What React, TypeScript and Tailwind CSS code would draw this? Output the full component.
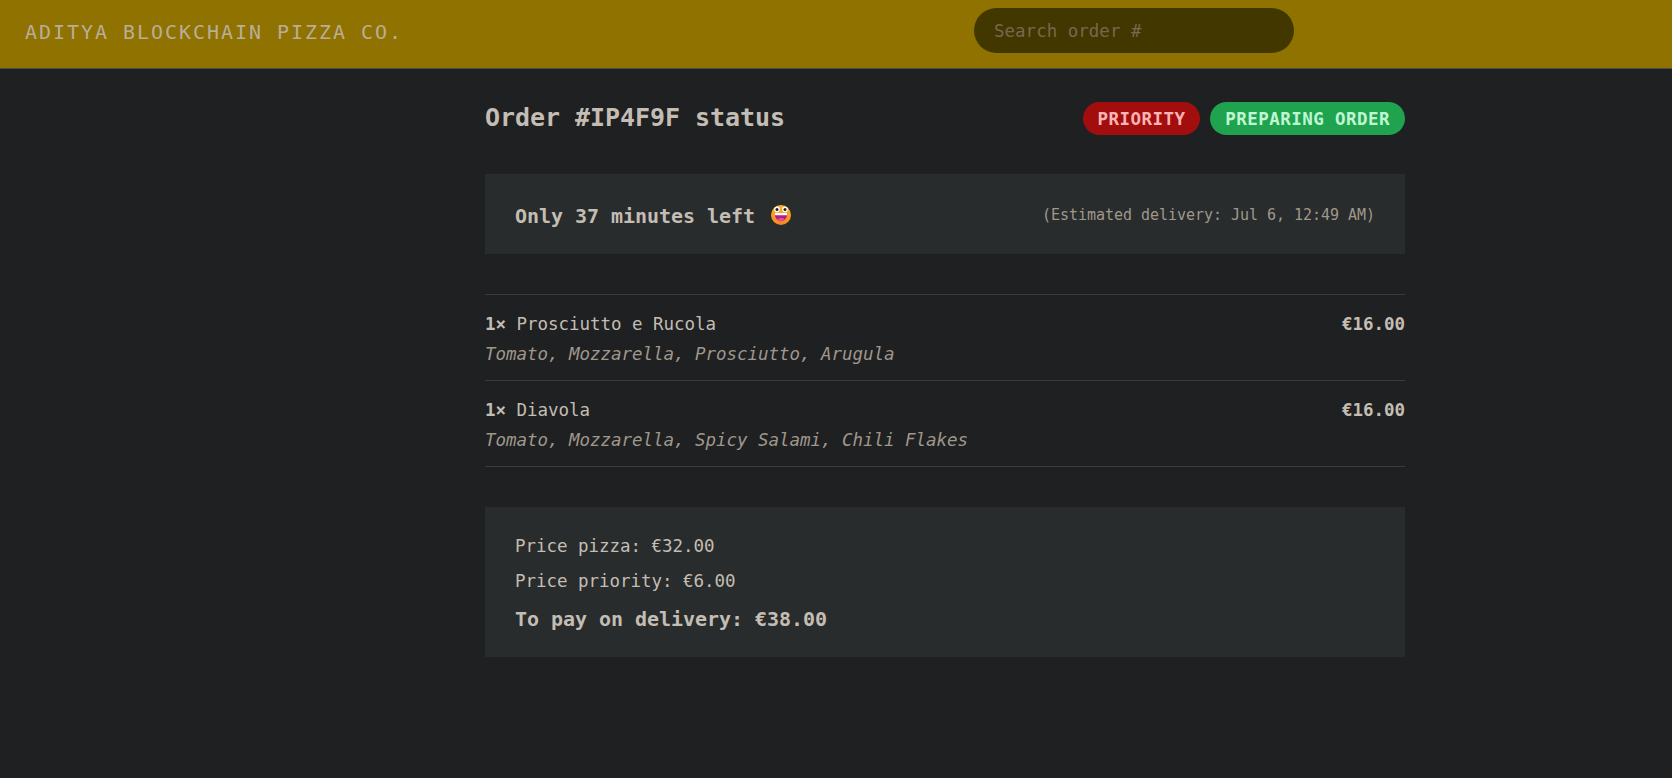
const items = [
  { name: "Prosciutto e Rucola", ingredients: "Tomato, Mozzarella, Prosciutto, Arugula", price: "€16.00" },
  { name: "Diavola", ingredients: "Tomato, Mozzarella, Spicy Salami, Chili Flakes", price: "€16.00" },
]

function GrinEmoji() {
  return (
    <svg width="20" height="20" viewBox="0 0 20 20" className="-mt-0.5 shrink-0">
      <defs>
        <linearGradient id="face" x1="0" y1="0" x2="0" y2="1">
          <stop offset="0" stopColor="#fcb32c" />
          <stop offset="1" stopColor="#f6871f" />
        </linearGradient>
      </defs>
      <circle cx="10" cy="10" r="10" fill="url(#face)" />
      <path d="M3.8 8h12.4c.3 4.6-2.4 8.2-6.2 8.2S3.500 12.600 3.800 8z" fill="#b81b86" />
      <path d="M3.8 8h12.400l-.1 2.200H3.900z" fill="#fff" />
      <path d="M6.400 14.300c1-.8 2.200-1.200 3.600-1.200s2.600.4 3.600 1.200c-1 1.200-2.200 1.900-3.600 1.900s-2.600-.7-3.600-1.900z" fill="#e2509f" />
      <circle cx="6" cy="4.400" r="2.800" fill="#fff" />
      <circle cx="14" cy="4.400" r="2.800" fill="#fff" />
      <circle cx="6" cy="4.600" r="1.500" fill="#2a1a12" />
      <circle cx="14" cy="4.600" r="1.500" fill="#2a1a12" />
    </svg>
  )
}

export default function App() {
  return (
    <div className="min-h-screen bg-[#1e2022] font-['DejaVu_Sans_Mono',monospace] text-[#c4bdb3]">
      {/* Header */}
      <header className="flex h-[69px] items-start border-b border-[#4a4d4f] bg-[#8f7200] pt-2 pl-[25px]">
        <a className="w-[949px] text-[20px] leading-[49px] tracking-[1.96px] text-[#b9ae98] uppercase">
          Aditya Blockchain Pizza Co.
        </a>
        <input
          placeholder="Search order #"
          className="h-[45px] w-[320px] rounded-full bg-[#433700] px-5 text-[17.5px] placeholder:text-[#73694f] focus:outline-none"
        />
      </header>

      <main className="ml-[485px] w-[920px] pt-8">
        {/* Status */}
        <div className="flex h-[35px] items-center justify-between">
          <h2 className="pb-0.5 text-[25px] font-semibold tracking-[-0.05px]">Order #IP4F9F status</h2>
          <div className="flex gap-2.5">
            <span className="flex h-[33px] items-center rounded-full bg-[#a20e0e] px-[15px] pt-0.5 text-[17.5px] font-semibold tracking-[0.44px] text-[#fcb4b4]">
              PRIORITY
            </span>
            <span className="flex h-[33px] items-center rounded-full bg-[#1fa34f] px-[15px] pt-0.5 text-[17.5px] font-semibold tracking-[0.44px] text-[#bff7d3]">
              PREPARING ORDER
            </span>
          </div>
        </div>

        {/* Delivery time */}
        <div className="mt-[38px] flex h-20 items-center justify-between bg-[#282c2d] px-[30px]">
          <p className="flex items-center gap-4 pt-1 text-[20px] font-bold tracking-[-0.04px]">
            Only 37 minutes left
            <GrinEmoji />
          </p>
          <p className="pt-0.5 text-[15px] tracking-[-0.03px] text-[#a0978b]">(Estimated delivery: Jul 6, 12:49 AM)</p>
        </div>

        {/* Items */}
        <ul className="mt-10 border-y border-[#3a3d40]">
          {items.map((item, i) => (
            <li key={item.name} className={i > 0 ? "border-t border-[#3a3d40] pt-[17px] pb-[13px]" : "pt-[17px] pb-[13px]"}>
              <div className="flex justify-between text-[17.5px] leading-[25px] tracking-[-0.035px]">
                <p>
                  <span className="font-bold">1×</span> {item.name}
                </p>
                <p className="font-bold">{item.price}</p>
              </div>
              <p className="mt-[5px] text-[17.5px] leading-[25px] tracking-[-0.035px] text-[#a0978b] italic">{item.ingredients}</p>
            </li>
          ))}
        </ul>

        {/* Totals */}
        <div className="mt-10 flex flex-col gap-2.5 bg-[#282c2d] px-[30px] pt-[27px] pb-[23px]">
          <p className="text-[17.5px] leading-[25px] tracking-[-0.035px]">Price pizza: €32.00</p>
          <p className="text-[17.5px] leading-[25px] tracking-[-0.035px]">Price priority: €6.00</p>
          <p className="text-[20px] leading-[30px] font-bold tracking-[-0.04px]">To pay on delivery: €38.00</p>
        </div>
      </main>
    </div>
  )
}
